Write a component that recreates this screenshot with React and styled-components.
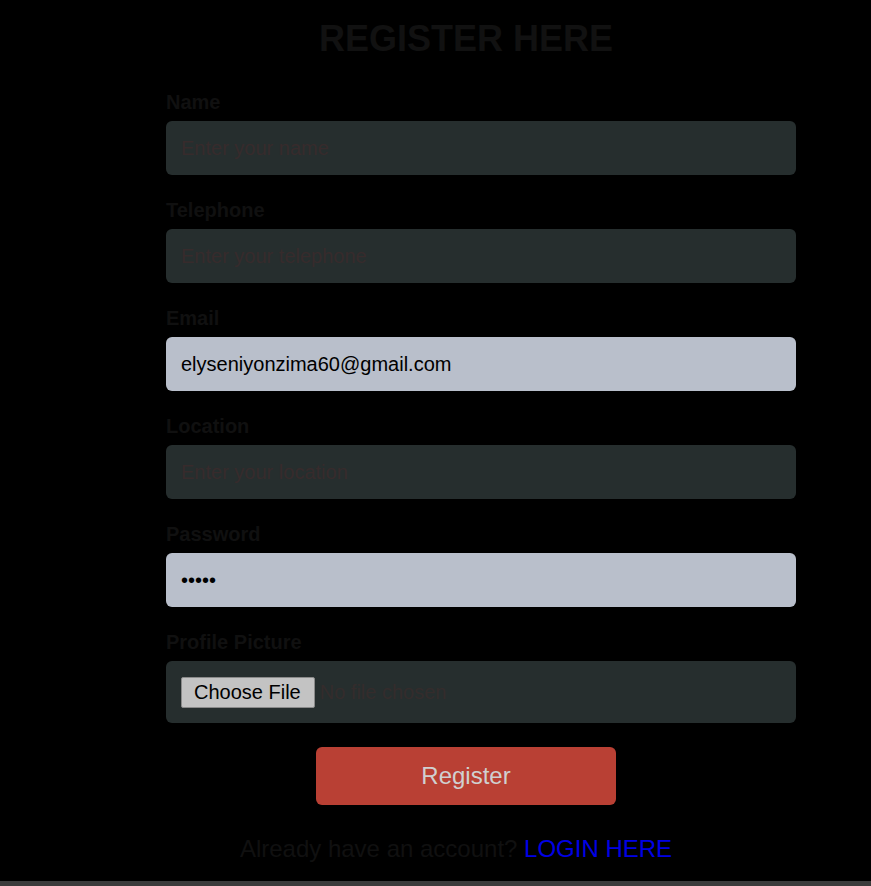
import styled, { createGlobalStyle } from "styled-components";

const GlobalStyle = createGlobalStyle`
  html, body {
    margin: 0;
    padding: 0;
    background: #000;
  }
  body {
    font-family: "Liberation Sans", Arial, sans-serif;
  }
`;

const Page = styled.div`
  padding-top: 18px;
  background: #000;
`;

const Container = styled.div`
  width: 600px;
  margin-left: 166px;
`;

const Title = styled.h1`
  margin: 0;
  font-size: 36px;
  line-height: 42px;
  font-weight: 700;
  color: #111;
  text-align: center;
`;

const Form = styled.form`
  margin-top: 31px;
  display: flex;
  flex-direction: column;
`;

const Field = styled.div`
  margin-bottom: 24px;
`;

const Label = styled.label`
  display: block;
  font-size: 20px;
  line-height: 23px;
  font-weight: 700;
  color: #101010;
  margin-bottom: 7px;
`;

const Input = styled.input`
  display: block;
  width: 100%;
  padding: 15px;
  border: none;
  outline: none;
  border-radius: 6px;
  font-family: "Liberation Sans", Arial, sans-serif;
  font-size: 20px;
  line-height: 24px;
  height: 24px;
  color: #000;
  background: ${(p) => (p.filled ? "#b9bfcb" : "#262e2e")};
  &::placeholder {
    color: #372b2c;
  }
`;

const FileBox = styled.div`
  display: flex;
  align-items: center;
  width: 100%;
  padding: 16px 15px 15px;
  border-radius: 6px;
  background: #262e2e;
`;

const FileButton = styled.span`
  display: inline-block;
  padding: 3px 13px 3px 12px;
  font-size: 20px;
  line-height: 23px;
  color: #000;
  background: #c3c3c3;
  border: 1px solid #8a8a8a;
  border-radius: 2px;
  margin-right: 5px;
`;

const FileText = styled.span`
  font-size: 20px;
  line-height: 23px;
  color: #342c2c;
`;

const Submit = styled.button`
  align-self: center;
  width: 300px;
  height: 58px;
  border: none;
  border-radius: 6px;
  background: #b94034;
  color: #d0d0d0;
  font-family: "Liberation Sans", Arial, sans-serif;
  font-size: 24px;
  cursor: pointer;
`;

const Footer = styled.p`
  margin: 30px 0 0;
  padding-right: 20px;
  font-size: 24px;
  line-height: 28px;
  text-align: center;
  color: #101010;
`;

const LoginLink = styled.a`
  color: #0000e6;
  text-decoration: none;
`;

const Divider = styled.div`
  margin-top: 18px;
  height: 5px;
  background: #3b3b3b;
`;

const fields = [
  { label: "Name", placeholder: "Enter your name" },
  { label: "Telephone", placeholder: "Enter your telephone" },
  { label: "Email", value: "elyseniyonzima60@gmail.com" },
  { label: "Location", placeholder: "Enter your location" },
  { label: "Password", value: "12345", type: "password" },
];

export default function App() {
  return (
    <Page>
      <GlobalStyle />
      <Container>
        <Title>REGISTER HERE</Title>
        <Form onSubmit={(e) => e.preventDefault()}>
          {fields.map((f) => (
            <Field key={f.label}>
              <Label>{f.label}</Label>
              <Input
                type={f.type || "text"}
                placeholder={f.placeholder}
                defaultValue={f.value}
                filled={f.value ? 1 : 0}
              />
            </Field>
          ))}
          <Field>
            <Label>Profile Picture</Label>
            <FileBox>
              <FileButton>Choose File</FileButton>
              <FileText>No file chosen</FileText>
            </FileBox>
          </Field>
          <Submit type="submit">Register</Submit>
        </Form>
        <Footer>
          Already have an account? <LoginLink href="#">LOGIN HERE</LoginLink>
        </Footer>
      </Container>
      <Divider />
    </Page>
  );
}
